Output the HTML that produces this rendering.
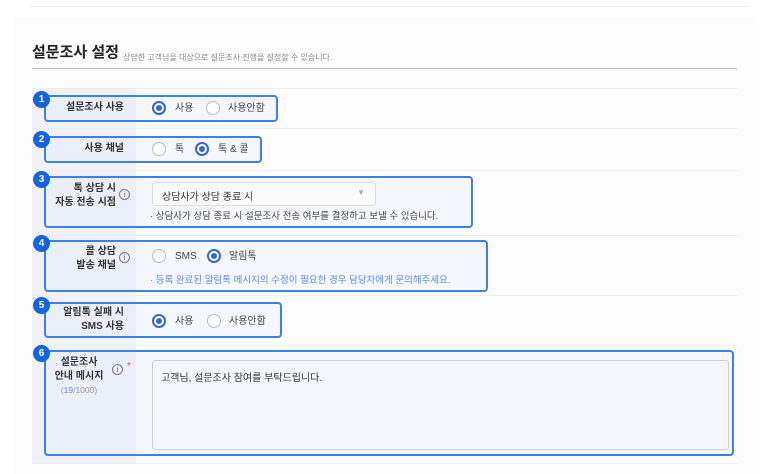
<!DOCTYPE html>
<html><head><meta charset="utf-8"><style>
*{box-sizing:border-box;margin:0;padding:0}
body{width:773px;height:474px;background:#fff;font-family:"Liberation Sans","Noto Sans CJK KR",sans-serif;position:relative;overflow:hidden;color:#333}
.a{position:absolute}
.sep{position:absolute;left:32px;width:705px;height:1px;background:#eceef1}
.lab{position:absolute;left:32px;width:104px;font-size:10px;font-weight:bold;color:#333;text-align:right;line-height:14px}
.box{position:absolute;border:2px solid #3b82e6;border-radius:4px;background:rgba(225,236,252,.35)}
.badge{position:absolute;width:17px;height:17px;border-radius:50%;background:#1463e6;color:#fff;font-size:10px;font-weight:bold;text-align:center;line-height:17px}
.r{position:absolute;width:14px;height:14px;border-radius:50%;border:1px solid #bbb;background:#fff}
.r.on{border:2px solid #3366dd}
.r.on:after{content:"";position:absolute;left:2px;top:2px;width:6px;height:6px;border-radius:50%;background:#3366dd}
.t{position:absolute;font-size:10px;color:#444;line-height:14px;margin-top:2px}
.i{position:absolute;width:11px;height:11px;border:1px solid #777;border-radius:50%;font-size:8px;line-height:9px;text-align:center;color:#666;font-family:"Liberation Serif",serif}
</style></head><body>
<div class="a" style="left:30px;top:6px;width:720px;height:1px;background:#eee"></div>
<div class="a" style="left:13px;top:18px;width:740px;height:456px;background:#fcfcfc"></div>
<div class="a" style="left:32px;top:41px;font-size:15px;font-weight:bold;color:#222">설문조사 설정</div>
<div class="a" style="left:123px;top:52px;font-size:8px;color:#888">상담한 고객님을 대상으로 설문조사 진행을 설정할 수 있습니다.</div>
<div class="a" style="left:32px;top:68px;width:705px;height:1px;background:#bbb"></div>
<div class="a" style="left:32px;top:88px;width:104px;height:376px;background:#f0f2f6"></div>
<div class="a" style="left:136px;top:88px;width:601px;height:376px;background:#fdfdfd"></div>
<div class="sep" style="top:88px"></div><div class="sep" style="top:128px"></div><div class="sep" style="top:170px"></div><div class="sep" style="top:235px"></div><div class="sep" style="top:295px"></div><div class="sep" style="top:345px"></div><div class="sep" style="top:463px"></div>

<div class="box" style="left:44px;top:95px;width:234px;height:27px"></div>
<div class="lab" style="top:101px;left:32px;width:92px">설문조사 사용</div>
<div class="r on" style="left:152px;top:101px"></div><div class="t" style="left:175px;top:100px">사용</div>
<div class="r" style="left:206px;top:101px"></div><div class="t" style="left:228px;top:100px">사용안함</div>

<div class="box" style="left:44px;top:136px;width:218px;height:27px"></div>
<div class="lab" style="top:142px;left:32px;width:92px">사용 채널</div>
<div class="r" style="left:152px;top:142px"></div><div class="t" style="left:175px;top:141px">톡</div>
<div class="r on" style="left:195px;top:142px"></div><div class="t" style="left:218px;top:141px">톡 &amp; 콜</div>

<div class="box" style="left:44px;top:176px;width:429px;height:52px"></div>
<div class="lab" style="top:182px;left:32px;width:84px">톡 상담 시<br>자동 전송 시점</div>
<div class="i" style="left:119px;top:189px">i</div>
<div class="a" style="left:152px;top:182px;width:224px;height:24px;border:1px solid #ddd;border-radius:3px;background:#fafafa;font-size:10px;color:#333;padding:5px 9px">상담사가 상담 종료 시<span style="position:absolute;right:10px;top:5px;color:#aaa;font-size:8px">▼</span></div>
<div class="t" style="left:150px;top:208px;font-size:9.5px">· 상담사가 상담 종료 시 설문조사 전송 여부를 결정하고 보낼 수 있습니다.</div>

<div class="box" style="left:44px;top:240px;width:444px;height:52px"></div>
<div class="lab" style="top:245px;left:32px;width:84px">콜 상담<br>발송 채널</div>
<div class="i" style="left:119px;top:252px">i</div>
<div class="r" style="left:152px;top:249px"></div><div class="t" style="left:175px;top:248px">SMS</div>
<div class="r on" style="left:207px;top:249px"></div><div class="t" style="left:229px;top:248px">알림톡</div>
<div class="t" style="left:150px;top:272px;font-size:9.5px;color:#5b8def">· 등록 완료된 알림톡 메시지의 수정이 필요한 경우 담당자에게 문의해주세요.</div>

<div class="box" style="left:44px;top:302px;width:238px;height:36px"></div>
<div class="lab" style="top:306px;left:32px;width:92px">알림톡 실패 시<br>SMS 사용</div>
<div class="r on" style="left:152px;top:314px"></div><div class="t" style="left:175px;top:313px">사용</div>
<div class="r" style="left:207px;top:314px"></div><div class="t" style="left:229px;top:313px">사용안함</div>

<div class="box" style="left:44px;top:350px;width:690px;height:106px"></div>
<div class="lab" style="top:356px;left:40px;width:78px;text-align:center">설문조사<br>안내 메시지</div>
<div class="a" style="left:40px;top:385px;width:78px;text-align:center;font-size:8.5px;color:#999">(<span style="color:#5b8def">19</span>/1000)</div>
<div class="i" style="left:112px;top:364px">i</div>
<div class="a" style="left:127px;top:361px;color:#e44;font-size:10px">*</div>
<div class="a" style="left:152px;top:360px;width:577px;height:90px;border:1px solid #ccd;border-radius:3px;background:#f3f7fd;font-size:10px;color:#333;padding:8px 8px">고객님, 설문조사 참여를 부탁드립니다.</div>

<div class="badge" style="left:33px;top:91px">1</div>
<div class="badge" style="left:33px;top:131px">2</div>
<div class="badge" style="left:33px;top:171px">3</div>
<div class="badge" style="left:33px;top:235px">4</div>
<div class="badge" style="left:33px;top:297px">5</div>
<div class="badge" style="left:33px;top:345px">6</div>
</body></html>
